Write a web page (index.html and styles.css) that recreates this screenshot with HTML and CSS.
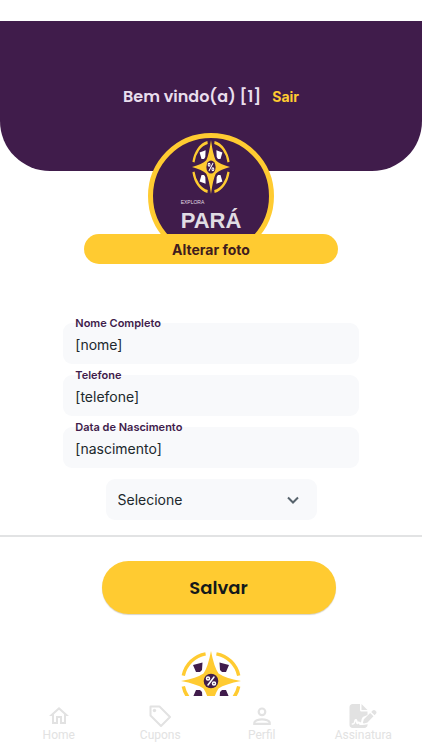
FILE: index.html
```html
<!DOCTYPE html>
<html lang="pt-BR">
<head>
<meta charset="utf-8">
<meta name="viewport" content="width=device-width, initial-scale=1">
<title>Perfil</title>
<link rel="stylesheet" href="styles.css">
</head>
<body>
<svg class="defs" aria-hidden="true">
  <symbol id="compass" viewBox="0 0 60 60" preserveAspectRatio="none">
    <g fill="none" stroke="#ffcb31" stroke-width="3.4">
      <path d="M24.6 2.8A28 28 0 0 0 2.3 24.6M35.4 2.8A28 28 0 0 1 57.7 24.6M2.3 35.4A28 28 0 0 0 24.6 57.2M57.7 35.4A28 28 0 0 1 35.4 57.2"/>
    </g>
    <path fill="#ffcb31" d="M30 0Q33 16 37.500 22.500Q44 27 60 30Q44 33 37.500 37.500Q33 44 30 60Q27 44 22.500 37.500Q16 33 0 30Q16 27 22.500 22.500Q27 16 30 0Z"/>
    <path fill="currentColor" d="M12 14L21.500 11.500L21 19L19 21L15 21ZM48 14L38.500 11.500L39 19L41 21L45 21ZM12 46L21.500 48.500L21 41L19 39L15 39ZM48 46L38.500 48.500L39 41L41 39L45 39Z"/>
    <circle cx="30" cy="30" r="7.300" fill="#401c4b"/>
    <g fill="none" stroke="#fff" stroke-width="1.500" stroke-linecap="round">
      <path d="M33 26L27 34"/><circle cx="27" cy="27.500" r="1.500"/><circle cx="33" cy="32.500" r="1.500"/>
    </g>
  </symbol>
</svg>
<main class="page">
  <header class="hero">
    <h1 class="greeting">Bem vindo(a) [1]</h1>
    <a class="logout" href="#">Sair</a>
  </header>
  <section class="photo">
    <div class="avatar">
      <svg class="avatar-mark" aria-hidden="true"><use href="#compass"/></svg>
      <div class="brand">
        <span class="brand-top">EXPLORA</span>
        <span class="brand-name">PARÁ</span>
      </div>
    </div>
    <button class="change-photo" type="button">Alterar foto</button>
  </section>
  <form class="profile">
    <div class="field">
      <label for="nome">Nome Completo</label>
      <input id="nome" type="text" value="[nome]">
    </div>
    <div class="field">
      <label for="telefone">Telefone</label>
      <input id="telefone" type="text" value="[telefone]">
    </div>
    <div class="field">
      <label for="nascimento">Data de Nascimento</label>
      <input id="nascimento" type="text" value="[nascimento]">
    </div>
    <div class="choice">
      <select aria-label="Selecione"><option>Selecione</option></select>
      <svg class="chevron" viewBox="0 0 12 8" aria-hidden="true"><path d="M1 1.500L6 6.500L11 1.500"/></svg>
    </div>
    <hr class="divider">
    <button class="save" type="submit">Salvar</button>
  </form>
  <svg class="footer-mark" aria-hidden="true"><use href="#compass"/></svg>
</main>
<nav class="tabs">
  <a href="#"><svg viewBox="0 0 24 24" aria-hidden="true"><path fill="currentColor" d="M12 5.690l5 4.500V18h-2v-6H9v6H7v-7.810l5-4.500M12 3L2 12h3v8h6v-6h2v6h6v-8h3L12 3z"/></svg>Home</a>
  <a href="#"><svg viewBox="0 0 24 24" aria-hidden="true"><path fill="none" stroke="currentColor" stroke-width="2" stroke-linejoin="round" d="M2.500 2.500H11.500L22 13L13 22L2.500 11.500Z"/><circle cx="6.500" cy="6.500" r="1.700" fill="currentColor"/></svg>Cupons</a>
  <a href="#"><svg viewBox="0 0 24 24" aria-hidden="true"><path fill="none" stroke="currentColor" stroke-width="2" d="M5 19v-1c0-2 4-3.100 7-3.100s7 1.100 7 3.100v1zM15 8a3 3 0 1 1-6 0a3 3 0 0 1 6 0z" transform="translate(-1.200 -1) scale(1.100)"/></svg>Perfil</a>
  <a href="#"><svg class="wide" viewBox="0 0 576 512" aria-hidden="true"><path fill="currentColor" d="M64 0C29 0 0 29 0 64v384c0 35 29 64 64 64h256c35 0 64-29 64-64v-19l-22 6-78 15h-54c-9 0-17-5-21-13l-8-17c-2-4-8-4-10 0-5 9-14 14-24 13s-18-8-21-17l-15-49-10 34c-8 25-31 42-57 42H48v-32h16c12 0 23-8 26-19l15-50c4-14 16-23 30-23s26 9 30 23l12 39c16-13 42-8 52 9h17l14-70 24-43L384 233V160H256c-18 0-32-14-32-32V0zM256 0v128h128zM550 139c-16-16-41-16-56 0l-30 29 71 71 29-30c16-15 16-41 0-56zM311 321c-4 4-7 9-8 15l-15 60c-3 12 8 22 19 19l60-15c6-1 11-4 15-8l130-130-71-71z"/></svg>Assinatura</a>
</nav>
</body>
</html>
```
FILE: styles.css
```css
* { box-sizing: border-box; }

body {
  margin: 0;
  height: 100vh;
  display: flex;
  flex-direction: column;
  background: #fff;
  font-family: Inter, "Open Sans", sans-serif;
  color: #14181b;
}

button, input, select { font: inherit; border: 0; }
a { text-decoration: none; }

.defs { position: absolute; width: 0; height: 0; }

.page {
  flex: 1;
  min-height: 0;
  overflow-y: auto;
  scrollbar-width: none;
  padding-top: 21px;
  display: flex;
  flex-direction: column;
}
.page > * { flex-shrink: 0; }

.hero {
  display: flex;
  justify-content: center;
  align-items: center;
  gap: 11px;
  height: 150px;
  background: #401c4b;
  border-radius: 0 0 50px 50px;
}
.greeting {
  margin: 0;
  font-family: Poppins, Inter, sans-serif;
  font-size: 16px;
  font-weight: 600;
  color: #e9deed;
}
.logout { font-size: 14px; font-weight: 700; color: #ffcb31; }

.photo {
  display: flex;
  flex-direction: column;
  align-items: center;
  margin-top: -38px;
}
.avatar {
  display: flex;
  flex-direction: column;
  align-items: center;
  width: 126px;
  height: 126px;
  padding-top: 2px;
  overflow: hidden;
  border: 5px solid #ffcb31;
  border-radius: 50%;
  background: #401c4b;
}
.avatar-mark { flex-shrink: 0; width: 38px; height: 54px; color: #fff; }
.brand {
  display: flex;
  flex-direction: column;
  margin-top: 5px;
  color: #e0dce3;
}
.brand-top { font: 5px/6px "Liberation Sans", sans-serif; }
.brand-name { font: 700 22px/32px "Liberation Sans", sans-serif; }
.change-photo {
  width: 60%;
  height: 30px;
  margin-top: -25px;
  border-radius: 15px;
  background: #ffcb31;
  color: #401c1e;
  font-size: 14px;
  font-weight: 700;
  z-index: 1;
}

.profile {
  display: flex;
  flex-direction: column;
  align-items: center;
  gap: 11px;
  margin-top: 59px;
}
.field {
  display: flex;
  flex-direction: column;
  width: 70%;
  height: 41px;
  border-radius: 9px;
  background: #f8f9fb;
}
.field label {
  margin: -8px 12px 0;
  font-size: 11px;
  line-height: 16px;
  font-weight: 600;
  color: #401c4b;
}
.field input {
  width: 100%;
  height: 26px;
  padding: 0 12px;
  background: transparent;
  font-size: 14px;
  color: #20282c;
}
.choice { position: relative; width: 50%; }
.choice select {
  width: 100%;
  height: 41px;
  padding: 0 12px;
  appearance: none;
  border-radius: 9px;
  background: #f8f9fb;
  font-size: 14px;
  color: #20282c;
}
.chevron {
  position: absolute;
  right: 18px;
  top: 17px;
  width: 12px;
  height: 8px;
  fill: none;
  stroke: #57636c;
  stroke-width: 2;
}
.divider {
  width: 100%;
  height: 2px;
  margin: 4px 0 0;
  border: 0;
  background: #e2e3e4;
}
.save {
  width: 234px;
  height: 53px;
  margin: 13px 0 0 15px;
  border-radius: 27px;
  background: #ffcb31;
  box-shadow: 0 1px 1px #d8d4c8;
  color: #14181b;
  font-family: Poppins, Inter, sans-serif;
  font-size: 18px;
  font-weight: 600;
}
.footer-mark {
  align-self: center;
  width: 60px;
  height: 60px;
  margin-top: 37px;
  color: #401c4b;
}

.tabs {
  display: grid;
  grid-template-columns: repeat(4, 1fr);
  height: 54px;
  padding: 8px 8px 0;
  background: #fff;
}
.tabs a {
  display: flex;
  flex-direction: column;
  align-items: center;
  font: 12px/14px Roboto, sans-serif;
  color: #e2e2e2;
}
.tabs svg { width: 24px; height: 24px; }
.tabs .wide { width: 28px; }
```
